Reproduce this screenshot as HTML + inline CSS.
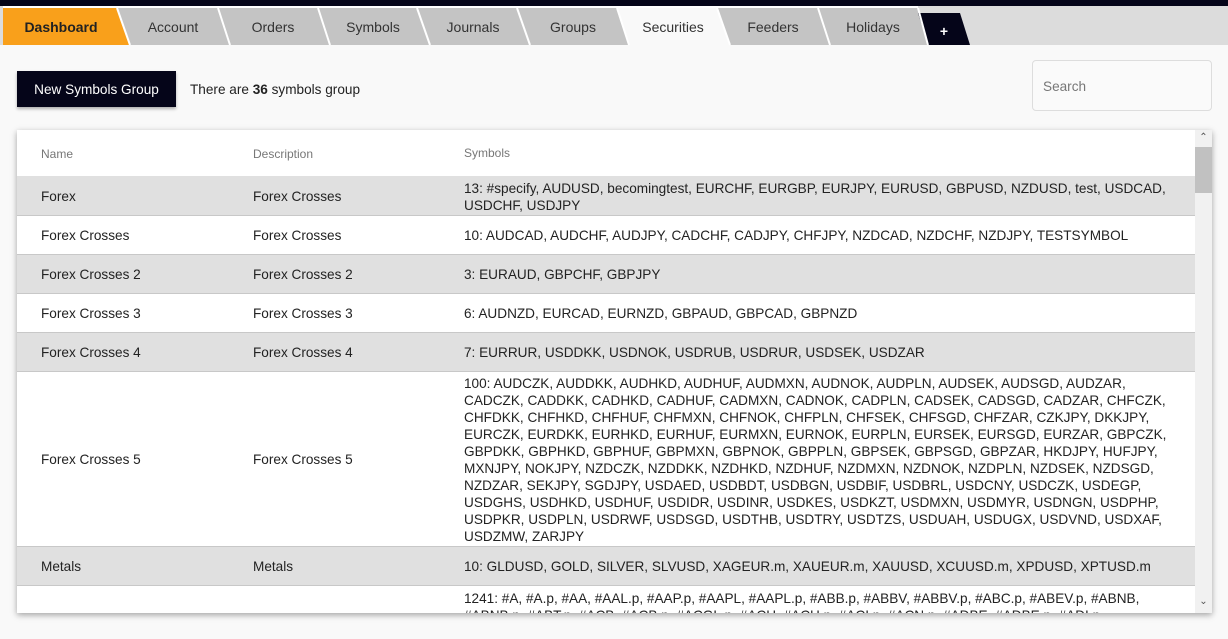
<!DOCTYPE html>
<html><head><style>
*{box-sizing:border-box;margin:0;padding:0}
body{width:1228px;height:639px;overflow:hidden;background:#f9f9f9;font-family:"Liberation Sans",Arial,sans-serif;color:#222;position:relative}
.top{position:absolute;left:0;top:0;width:1228px;height:6px;background:#050519}
.bar{position:absolute;left:0;top:6px;width:1228px;height:39px;background:#dcdcdc}
.tab{position:absolute;top:9px;height:37px;font-size:14px;line-height:37px;text-align:center;color:#333;transform:translateX(-50%);white-space:nowrap}
.btn{position:absolute;left:17px;top:71px;width:159px;height:36px;background:#050519;color:#fff;font-size:13.6px;line-height:37px;text-align:center;box-shadow:0 2px 3px rgba(0,0,0,.3)}
.info{position:absolute;left:190px;top:82px;font-size:13.6px}
.search{position:absolute;left:1032px;top:60px;width:180px;height:51px;border:1px solid #ddd;border-radius:4px;background:#fafafa;font-size:13.6px;color:#777;padding:18px 10px}
.card{position:absolute;left:17px;top:130px;width:1195px;height:483px;background:#fff;box-shadow:0 2px 6px rgba(0,0,0,.35);overflow:hidden}
.row{position:absolute;left:0;width:1178px;font-size:13.6px;border-bottom:1px solid #c8c8c8}
.row.g{background:#e0e0e0}
.row div{position:absolute;top:0}
.c1{left:24px}.c2{left:236px}.c3{left:447px;width:712px;line-height:17px}
.hd{font-size:12px;color:#777}
.sb{position:absolute;left:1178px;top:0;width:17px;height:483px;background:#f1f1f1}
.th{position:absolute;left:1178px;top:17px;width:17px;height:46px;background:#c1c1c1}
.ar{position:absolute;left:1178px;width:17px;text-align:center;font-size:10px;color:#555}
</style></head><body>
<div class="top"></div>
<div class="bar"></div>
<svg style="position:absolute;left:0;top:0" width="1228" height="46">
<polygon points="3,8 117,8 130,45 3,45" fill="#f9a01b"/>
<polygon points="117,8 218,8 230,45 130,45" fill="#c4c4c4"/>
<polygon points="218,8 318,8 330,45 230,45" fill="#c4c4c4"/>
<polygon points="318,8 417,8 430,45 330,45" fill="#c4c4c4"/>
<polygon points="417,8 517,8 530,45 430,45" fill="#c4c4c4"/>
<polygon points="517,8 617,8 629,45 530,45" fill="#c4c4c4"/>
<polygon points="617,8 717,8 730,45 629,45" fill="#f9f9f9"/>
<polygon points="717,8 818,8 830,45 730,45" fill="#c4c4c4"/>
<polygon points="818,8 918,8 928,45 830,45" fill="#c4c4c4"/>
<polygon points="918,13 960,13 970,45 928,45" fill="#050519"/>
<g stroke="#fff" stroke-width="2">
<line x1="218" y1="8" x2="230" y2="45"/><line x1="318" y1="8" x2="330" y2="45"/>
<line x1="417" y1="8" x2="430" y2="45"/><line x1="517" y1="8" x2="530" y2="45"/>
<line x1="617" y1="8" x2="629" y2="45"/><line x1="717" y1="8" x2="730" y2="45"/>
<line x1="818" y1="8" x2="830" y2="45"/><line x1="918" y1="8" x2="928" y2="45"/>
<line x1="117" y1="8" x2="130" y2="45"/><line x1="3" y1="7" x2="918" y2="7"/>
</g>
</svg>
<div class="tab" style="left:61px;font-weight:bold;color:#222">Dashboard</div>
<div class="tab" style="left:173px">Account</div>
<div class="tab" style="left:273px">Orders</div>
<div class="tab" style="left:373px">Symbols</div>
<div class="tab" style="left:473px">Journals</div>
<div class="tab" style="left:573px">Groups</div>
<div class="tab" style="left:673px">Securities</div>
<div class="tab" style="left:773px">Feeders</div>
<div class="tab" style="left:873px">Holidays</div>
<div class="tab" style="left:944px;color:#fff;font-weight:bold;top:12px;line-height:38px">+</div>
<div class="btn">New Symbols Group</div>
<div class="info">There are <b>36</b> symbols group</div>
<div class="search">Search</div>
<div class="card">
<div class="row" style="top:0;height:46px;border:none"><div class="c1 hd" style="top:17px">Name</div><div class="c2 hd" style="top:17px">Description</div><div class="c3 hd" style="top:15px">Symbols</div></div>
<div class="row g" style="top:46px;height:40px"><div class="c1" style="top:13px">Forex</div><div class="c2" style="top:13px">Forex Crosses</div><div class="c3" style="top:4px">13: #specify, AUDUSD, becomingtest, EURCHF, EURGBP, EURJPY, EURUSD, GBPUSD, NZDUSD, test, USDCAD, USDCHF, USDJPY</div></div>
<div class="row" style="top:86px;height:39px"><div class="c1" style="top:12px">Forex Crosses</div><div class="c2" style="top:12px">Forex Crosses</div><div class="c3" style="top:11px">10: AUDCAD, AUDCHF, AUDJPY, CADCHF, CADJPY, CHFJPY, NZDCAD, NZDCHF, NZDJPY, TESTSYMBOL</div></div>
<div class="row g" style="top:125px;height:39px"><div class="c1" style="top:12px">Forex Crosses 2</div><div class="c2" style="top:12px">Forex Crosses 2</div><div class="c3" style="top:11px">3: EURAUD, GBPCHF, GBPJPY</div></div>
<div class="row" style="top:164px;height:39px"><div class="c1" style="top:12px">Forex Crosses 3</div><div class="c2" style="top:12px">Forex Crosses 3</div><div class="c3" style="top:11px">6: AUDNZD, EURCAD, EURNZD, GBPAUD, GBPCAD, GBPNZD</div></div>
<div class="row g" style="top:203px;height:39px"><div class="c1" style="top:12px">Forex Crosses 4</div><div class="c2" style="top:12px">Forex Crosses 4</div><div class="c3" style="top:11px">7: EURRUR, USDDKK, USDNOK, USDRUB, USDRUR, USDSEK, USDZAR</div></div>
<div class="row" style="top:242px;height:175px"><div class="c1" style="top:80px">Forex Crosses 5</div><div class="c2" style="top:80px">Forex Crosses 5</div><div class="c3" style="top:3px">100: AUDCZK, AUDDKK, AUDHKD, AUDHUF, AUDMXN, AUDNOK, AUDPLN, AUDSEK, AUDSGD, AUDZAR, CADCZK, CADDKK, CADHKD, CADHUF, CADMXN, CADNOK, CADPLN, CADSEK, CADSGD, CADZAR, CHFCZK, CHFDKK, CHFHKD, CHFHUF, CHFMXN, CHFNOK, CHFPLN, CHFSEK, CHFSGD, CHFZAR, CZKJPY, DKKJPY, EURCZK, EURDKK, EURHKD, EURHUF, EURMXN, EURNOK, EURPLN, EURSEK, EURSGD, EURZAR, GBPCZK, GBPDKK, GBPHKD, GBPHUF, GBPMXN, GBPNOK, GBPPLN, GBPSEK, GBPSGD, GBPZAR, HKDJPY, HUFJPY, MXNJPY, NOKJPY, NZDCZK, NZDDKK, NZDHKD, NZDHUF, NZDMXN, NZDNOK, NZDPLN, NZDSEK, NZDSGD, NZDZAR, SEKJPY, SGDJPY, USDAED, USDBDT, USDBGN, USDBIF, USDBRL, USDCNY, USDCZK, USDEGP, USDGHS, USDHKD, USDHUF, USDIDR, USDINR, USDKES, USDKZT, USDMXN, USDMYR, USDNGN, USDPHP, USDPKR, USDPLN, USDRWF, USDSGD, USDTHB, USDTRY, USDTZS, USDUAH, USDUGX, USDVND, USDXAF, USDZMW, ZARJPY</div></div>
<div class="row g" style="top:417px;height:39px"><div class="c1" style="top:12px">Metals</div><div class="c2" style="top:12px">Metals</div><div class="c3" style="top:11px">10: GLDUSD, GOLD, SILVER, SLVUSD, XAGEUR.m, XAUEUR.m, XAUUSD, XCUUSD.m, XPDUSD, XPTUSD.m</div></div>
<div class="row" style="top:456px;height:60px;border:none"><div class="c3" style="top:4px">1241: #A, #A.p, #AA, #AAL.p, #AAP.p, #AAPL, #AAPL.p, #ABB.p, #ABBV, #ABBV.p, #ABC.p, #ABEV.p, #ABNB, #ABNB.p, #ABT.p, #ACB, #ACB.p, #ACGL.p, #ACH, #ACH.p, #ACI.p, #ACN.p, #ADBE, #ADBE.p, #ADI.p</div></div>
<div class="sb"></div><div class="th"></div>
<div class="ar" style="top:2px">&#8963;</div><div class="ar" style="top:466px">&#8964;</div>
</div>
</body></html>
